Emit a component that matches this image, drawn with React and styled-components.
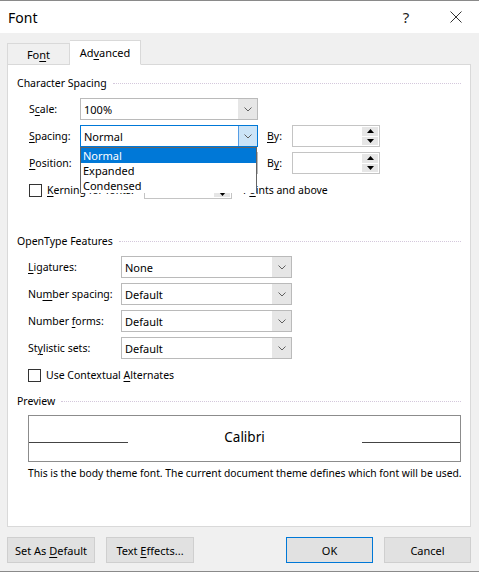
import React from 'react'
import styled, { createGlobalStyle } from 'styled-components'

const GlobalStyle = createGlobalStyle`
    html, body{
        margin: 0;
        padding: 0;
        background: #f0f0f0;
    }
    *{
        box-sizing: border-box;
    }
`;

const uiFont = `"Noto Sans", "Open Sans", sans-serif`;

const Window = styled.div`
    width: 479px;
    height: 572px;
    display: flex;
    flex-direction: column;
    background: #f0f0f0;
    border-top: 1px solid #8a8a8a;
    border-bottom: 1px solid #8a8a8a;
    font-family: ${uiFont};
    font-size: 10.5px;
    color: #000;
`;

const TitleBar = styled.div`
    height: 32px;
    flex: none;
    background: white;
    display: flex;
    align-items: center;
    padding-left: 8px;
    h1{
        margin: 0;
        flex: 1;
        font-size: 14px;
        font-weight: 400;
    }
`;

const TitleButton = styled.div`
    width: ${p => p.$w}px;
    height: 32px;
    display: flex;
    align-items: center;
    justify-content: center;
    font-size: 15px;
    color: #222;
`;

const Body = styled.div`
    flex: 1;
    display: flex;
    flex-direction: column;
    padding: 7px 8px 8px 7px;
`;

const TabStrip = styled.div`
    height: 25px;
    display: flex;
    align-items: flex-end;
    margin-bottom: -1px;
    position: relative;
    z-index: 1;
`;

const Tab = styled.div`
    height: ${p => p.$active ? 25 : 22}px;
    width: ${p => p.$w}px;
    display: flex;
    align-items: center;
    justify-content: center;
    background: ${p => p.$active ? 'white' : '#f0f0f0'};
    border: 1px solid #d9d9d9;
    border-bottom: ${p => p.$active ? '1px solid white' : '1px solid #d9d9d9'};
    border-left: ${p => p.$active ? 'none' : '1px solid #d9d9d9'};
    font-size: 11px;
`;

const Panel = styled.div`
    flex: 1;
    background: white;
    border: 1px solid #d9d9d9;
    padding: 10px 9px 0 9px;
    display: flex;
    flex-direction: column;
`;

const GroupHeader = styled.div`
    display: flex;
    align-items: center;
    height: 16px;
    margin-top: ${p => p.$top || 0}px;
    gap: 6px;
    &::after{
        content: '';
        flex: 1;
        border-top: 1px dotted #d4c8dc;
    }
`;

const Rows = styled.div`
    display: flex;
    flex-direction: column;
    gap: 5px;
    padding-left: ${p => p.$indent || 11}px;
    margin-top: 7px;
    position: relative;
`;

const Row = styled.div`
    height: 22px;
    display: flex;
    align-items: center;
`;

const Label = styled.div`
    width: ${p => p.$w}px;
    flex: none;
    margin-left: ${p => p.$ml || 0}px;
    white-space: nowrap;
`;

const U = styled.span`
    text-decoration: underline;
    text-underline-offset: 2px;
`;

const Combo = styled.div`
    width: ${p => p.$w}px;
    height: 22px;
    flex: none;
    display: flex;
    border: 1px solid ${p => p.$focus ? '#0078d7' : '#bababa'};
    background: white;
    span{
        flex: 1;
        padding-left: 3px;
        display: flex;
        align-items: center;
        font-size: 11px;
    }
`;

const DropButton = styled.div`
    width: 19px;
    display: flex;
    align-items: center;
    justify-content: center;
    background: ${p => p.$focus ? '#cce4f7' : '#e6e6e6'};
    border-left: 1px solid ${p => p.$focus ? '#569de5' : '#e6e6e6'};
`;

const Chevron = () => (
    <svg width="8" height="5" viewBox="0 0 8 5">
        <path d="M0.5 0.5 L4 4 L7.5 0.5" fill="none" stroke="#606060" strokeWidth="1" />
    </svg>
);

const Spin = styled.div`
    width: ${p => p.$w}px;
    height: ${p => p.$h || 22}px;
    flex: none;
    display: flex;
    justify-content: flex-end;
    border: 1px solid #c4c4c4;
    background: white;
    padding: 1px;
`;

const SpinButtons = styled.div`
    width: 16px;
    display: flex;
    flex-direction: column;
    gap: 1px;
    div{
        flex: 1;
        background: #e6e6e6;
        display: flex;
        align-items: center;
        justify-content: center;
    }
`;

const Arrow = ({ up }) => (
    <svg width="7" height="4" viewBox="0 0 7 4">
        <path d={up ? 'M0 4 L3.5 0 L7 4 Z' : 'M0 0 L3.5 4 L7 0 Z'} fill="#000" />
    </svg>
);

const SpinBox = ({ w, h }) => (
    <Spin $w={w} $h={h}>
        <SpinButtons>
            <div><Arrow up /></div>
            <div><Arrow /></div>
        </SpinButtons>
    </Spin>
);

const Check = styled.div`
    width: 13px;
    height: 13px;
    flex: none;
    border: 1px solid #333;
    background: white;
    margin-right: 5px;
`;

const DropList = styled.div`
    position: absolute;
    left: 63px;
    top: 49px;
    width: 177px;
    height: 46px;
    border: 1px solid #646464;
    background: white;
    padding: 0;
    z-index: 2;
`;

const DropItem = styled.div`
    height: 15px;
    line-height: 15px;
    padding-left: 2px;
    font-size: 11px;
    background: ${p => p.$sel ? '#0078d7' : 'white'};
    color: ${p => p.$sel ? 'white' : '#000'};
`;

const PreviewBox = styled.div`
    margin: 6px 0 0 11px;
    height: 47px;
    border: 1px solid #8c8c8c;
    display: flex;
    align-items: center;
    justify-content: center;
    position: relative;
    font-size: 13.5px;
    padding-bottom: 4px;
`;

const BaseLine = styled.div`
    position: absolute;
    top: 26px;
    ${p => p.$side}: 0;
    width: ${p => p.$w}px;
    border-top: 1px solid #444;
`;

const Note = styled.div`
    margin: 3px 0 0 11px;
    height: 16px;
    line-height: 16px;
    font-size: 10.3px;
    white-space: nowrap;
`;

const Footer = styled.div`
    height: 26px;
    margin-top: 10px;
    display: flex;
    gap: 11px;
`;

const Button = styled.div`
    width: ${p => p.$w}px;
    height: 26px;
    display: flex;
    align-items: center;
    justify-content: center;
    background: #e1e1e1;
    border: 1px solid ${p => p.$def ? '#0078d7' : '#cfcfcf'};
    margin-left: ${p => p.$push ? 'auto' : '0'};
    font-size: 11px;
`;

const App = () => {
    return(
        <Window>
            <GlobalStyle />
            <TitleBar>
                <h1>Font</h1>
                <TitleButton $w={54}>?</TitleButton>
                <TitleButton $w={46}>
                    <svg width="12" height="12" viewBox="0 0 12 12">
                        <path d="M0.5 0.5 L11.5 11.5 M11.5 0.5 L0.5 11.5" stroke="#333" strokeWidth="1" />
                    </svg>
                </TitleButton>
            </TitleBar>
            <Body>
                <TabStrip>
                    <Tab $w={63}><span>Fo<U>n</U>t</span></Tab>
                    <Tab $w={71} $active><span>Ad<U>v</U>anced</span></Tab>
                </TabStrip>
                <Panel>
                    <GroupHeader>Character Spacing</GroupHeader>
                    <Rows $indent={12}>
                        <Row>
                            <Label $w={51}>S<U>c</U>ale:</Label>
                            <Combo $w={178}><span>100%</span><DropButton><Chevron /></DropButton></Combo>
                        </Row>
                        <Row>
                            <Label $w={51}><U>S</U>pacing:</Label>
                            <Combo $w={178} $focus><span>Normal</span><DropButton $focus><Chevron /></DropButton></Combo>
                            <Label $w={25} $ml={9}><U>B</U>y:</Label>
                            <SpinBox w={88} />
                        </Row>
                        <Row>
                            <Label $w={51}><U>P</U>osition:</Label>
                            <Combo $w={178}><span>Normal</span><DropButton><Chevron /></DropButton></Combo>
                            <Label $w={25} $ml={9}>B<U>y</U>:</Label>
                            <SpinBox w={88} />
                        </Row>
                        <Row>
                            <Check />
                            <Label $w={97}><U>K</U>erning for fonts:</Label>
                            <SpinBox w={88} h={18} />
                            <Label $w={120} $ml={11}>P<U>o</U>ints and above</Label>
                        </Row>
                        <DropList>
                            <DropItem $sel>Normal</DropItem>
                            <DropItem>Expanded</DropItem>
                            <DropItem>Condensed</DropItem>
                        </DropList>
                    </Rows>

                    <GroupHeader $top={32}>OpenType Features</GroupHeader>
                    <Rows>
                        <Row>
                            <Label $w={93}><U>L</U>igatures:</Label>
                            <Combo $w={171}><span>None</span><DropButton><Chevron /></DropButton></Combo>
                        </Row>
                        <Row>
                            <Label $w={93}>Nu<U>m</U>ber spacing:</Label>
                            <Combo $w={171}><span>Default</span><DropButton><Chevron /></DropButton></Combo>
                        </Row>
                        <Row>
                            <Label $w={93}>Number <U>f</U>orms:</Label>
                            <Combo $w={171}><span>Default</span><DropButton><Chevron /></DropButton></Combo>
                        </Row>
                        <Row>
                            <Label $w={93}>St<U>y</U>listic sets:</Label>
                            <Combo $w={171}><span>Default</span><DropButton><Chevron /></DropButton></Combo>
                        </Row>
                        <Row>
                            <Check />
                            <Label $w={200}>Use Contextual <U>A</U>lternates</Label>
                        </Row>
                    </Rows>

                    <GroupHeader $top={7}>Preview</GroupHeader>
                    <PreviewBox>
                        <BaseLine $side="left" $w={99} />
                        <span>Calibri</span>
                        <BaseLine $side="right" $w={98} />
                    </PreviewBox>
                    <Note>This is the body theme font. The current document theme defines which font will be used.</Note>
                </Panel>
                <Footer>
                    <Button $w={88}><span>Set As <U>D</U>efault</span></Button>
                    <Button $w={88}><span>Text <U>E</U>ffects...</span></Button>
                    <Button $w={87} $def $push><span>OK</span></Button>
                    <Button $w={87}><span>Cancel</span></Button>
                </Footer>
            </Body>
        </Window>
    );
}

export default App;
